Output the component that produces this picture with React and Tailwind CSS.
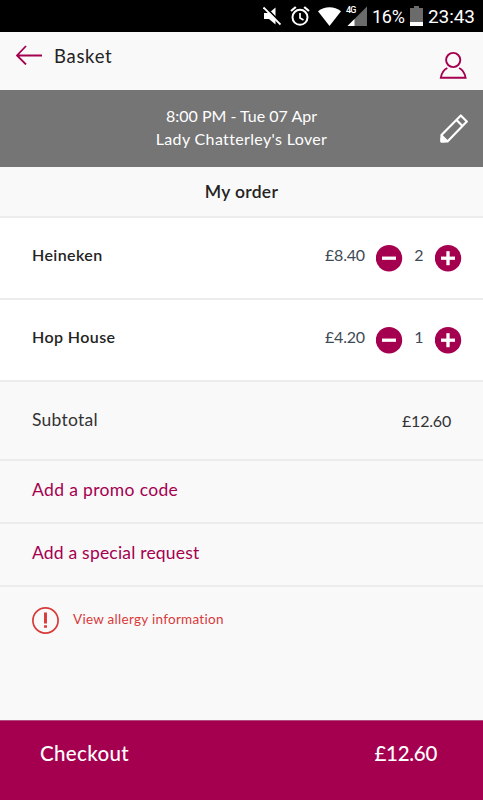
import { useState } from 'react';

const formatPrice = (value) => `£${value.toFixed(2)}`;

const StatusBar = () => (
  <div className="h-8 shrink-0 bg-black text-white flex items-center justify-end pr-[8px]">
    <svg className="w-[18px] h-[20px] mr-[9px]" viewBox="0 0 18 20" fill="none">
      <path d="M1 7h5l6.500-5.500v17L6 13H1z" fill="#fff" />
      <path d="M1.500 0l17 17.500" stroke="#000" strokeWidth="1.800" />
      <path d="M0.500 1.500l17 17" stroke="#fff" strokeWidth="1.800" />
    </svg>
    <svg className="w-5 h-5 mr-[8px]" viewBox="0 0 20 20" fill="none" stroke="#fff" strokeWidth="2">
      <circle cx="10" cy="11.300" r="7.500" />
      <path d="M10 7v5l3.500 2" strokeWidth="1.700" />
      <path d="M1 5l4.800-4M19 5l-4.800-4" strokeWidth="2.200" />
    </svg>
    <svg className="w-[23px] h-[19px] mr-[5px]" viewBox="0 0 23 19">
      <path d="M0 4.200C6.500-1 16.500-1 23 4.200L11.500 19z" fill="#fff" />
    </svg>
    <div className="relative w-[21px] h-5 mr-[5px]">
      <svg className="w-[21px] h-5" viewBox="0 0 21 20">
        <path d="M21 0.500v19.500H1.500z" fill="#6b6b6b" />
        <path d="M8.500 13v7h-7z" fill="#fff" />
      </svg>
      <span className="absolute left-0 top-0 bg-black text-[9px] leading-[8px] font-medium font-['Roboto',sans-serif] tracking-[-0.9px]">4G</span>
    </div>
    <span className="font-['Roboto',sans-serif] text-[18px] leading-8 w-[33px] mr-[5px] pt-[2px] tracking-[-0.3px] whitespace-nowrap">16%</span>
    <svg className="w-[13px] h-5 mr-[5px]" viewBox="0 0 13 20">
      <path d="M4 0h5v2h4v14H0V2h4z" fill="#6b6b6b" />
      <path d="M0 16h13v4H0z" fill="#fff" />
    </svg>
    <span className="font-['Roboto',sans-serif] text-[19px] leading-8 w-[47px] pt-[2px] tracking-[-0.100px] whitespace-nowrap">23:43</span>
  </div>
);

const RoundButton = ({ type, onClick }) => (
  <button onClick={onClick} aria-label={type === 'plus' ? 'Add one' : 'Remove one'} className="size-[27px] shrink-0">
    <svg className="size-[27px]" viewBox="0 0 27 27" stroke="#fff" strokeWidth="3.300">
      <circle cx="13" cy="13.200" r="13.200" fill="#a50050" stroke="none" />
      <path d="M6 13.200h14" />
      {type === 'plus' && <path d="M13 6.200v14" />}
    </svg>
  </button>
);

const OrderRow = ({ item, onChange }) => (
  <div className="h-[82px] shrink-0 bg-white border-b-2 border-[#ececec] flex items-center pl-8 pr-[21px]">
    <span className={`flex-1 text-[16px] font-semibold text-[#242424] pb-[7px] ${item.tracking}`}>{item.name}</span>
    <span className="w-[41px] text-[16px] text-[#3d4a57] pb-[6px] tracking-[-0.200px] whitespace-nowrap">{formatPrice(item.price * item.quantity)}</span>
    <div className="flex items-center pl-[10px]">
      <RoundButton type="minus" onClick={() => onChange(-1)} />
      <span className="w-[32px] text-center text-[16px] text-[#3d4a57] pb-[6px]">{item.quantity}</span>
      <RoundButton type="plus" onClick={() => onChange(1)} />
    </div>
  </div>
);

const App = () => {
  const [items, setItems] = useState([
    { name: 'Heineken', price: 4.2, quantity: 2, tracking: 'tracking-[0.400px]' },
    { name: 'Hop House', price: 4.2, quantity: 1, tracking: 'tracking-[0.400px]' },
  ]);

  const total = items.reduce((sum, item) => sum + item.price * item.quantity, 0);

  const changeQuantity = (name, step) => {
    setItems(items.map((item) => (item.name === name ? { ...item, quantity: Math.max(0, item.quantity + step) } : item)));
  };

  return (
    <div className="h-screen min-h-[800px] w-full bg-[#f9f9f9] font-['Lato',sans-serif] flex flex-col overflow-hidden">
      <StatusBar />

      <header className="h-[58px] shrink-0 flex items-start pl-[16px] pr-[16px]">
        <svg className="w-[26px] h-[20px] mt-[13px]" viewBox="0 0 26 20" fill="none" stroke="#a50050" strokeWidth="1.800">
          <path d="M26 10.500H1M10 1L1 10.500 10 19.500" />
        </svg>
        <h1 className="ml-[12px] mt-[12px] flex-1 text-[18.500px] leading-6 text-[#242424] tracking-[0.700px]">Basket</h1>
        <svg className="w-[28px] h-[28px] mt-[19px]" viewBox="0 0 28 28" fill="none" stroke="#a50050" strokeWidth="1.900">
          <circle cx="14.200" cy="9" r="7.100" />
          <path d="M8.300 17C4.500 19 2.500 22 1.800 26.800h24.800c-.7-4.800-2.700-7.800-6.500-9.800" />
        </svg>
      </header>

      <section className="h-[77px] shrink-0 bg-[#757575] text-white flex items-center pr-[15px]">
        <div className="flex-1 pl-[43px] pb-[4px] text-center text-[16px] leading-[23px]">
          <p className="tracking-[0px]">8:00 PM - Tue 07 Apr</p>
          <p className="tracking-[0.350px]">Lady Chatterley's Lover</p>
        </div>
        <svg className="w-[28px] h-[29px]" viewBox="0 0 28 29" fill="none" stroke="#fff" strokeWidth="2.200" strokeLinejoin="round">
          <path d="M1.500 27.500V21L20.800 1.500 26.800 7.500 7.500 27.500zM16.500 6l6 6M1.500 21.500L7.500 27.500" />
          <path d="M1.500 24.500v3h3z" fill="#fff" />
        </svg>
      </section>

      <h2 className="h-[51px] shrink-0 border-b-2 border-[#ececec] flex items-center justify-center pt-[2px] text-[17.500px] font-semibold text-[#242424] tracking-[0.300px]">My order</h2>

      {items.map((item) => (
        <OrderRow key={item.name} item={item} onChange={(step) => changeQuantity(item.name, step)} />
      ))}

      <div className="h-[79px] shrink-0 border-b-2 border-[#ececec] flex items-center justify-between pl-8 pr-[32px] text-[#333]">
        <span className="text-[17.500px] pb-[1px] tracking-[0.250px]">Subtotal</span>
        <span className="text-[16px] pt-px tracking-[-0.200px]">{formatPrice(total)}</span>
      </div>

      <button className="h-[63px] shrink-0 border-b-2 border-[#ececec] pl-8 pb-[2px] text-left text-[17.500px] text-[#a50050] tracking-[0.350px]">Add a promo code</button>
      <button className="h-[63px] shrink-0 border-b-2 border-[#ececec] pl-8 pb-[2px] text-left text-[17.500px] text-[#a50050] tracking-[0.200px]">Add a special request</button>

      <div className="flex-1 flex items-start pl-8 pt-[19px] text-[#d83a3a]">
        <svg className="size-[27px] mt-px" viewBox="0 0 27 27" fill="none" stroke="currentColor">
          <circle cx="13.500" cy="13.500" r="12.600" strokeWidth="1.700" />
          <path d="M13.500 5.500v11M13.500 18.200v2.600" strokeWidth="2.900" />
        </svg>
        <span className="ml-[14px] pt-[3px] text-[13.500px] leading-5 tracking-[0.280px]">View allergy information</span>
      </div>

      <button className="h-20 shrink-0 bg-[#a50050] text-white flex items-center justify-between pl-[40px] pr-[46px] pb-[15px] text-[20.500px] font-medium border-t border-[#b44a80]">
        <span className="tracking-[0.350px]">Checkout</span>
        <span className="tracking-[-0.300px]">{formatPrice(total)}</span>
      </button>
    </div>
  );
};

export default App;
